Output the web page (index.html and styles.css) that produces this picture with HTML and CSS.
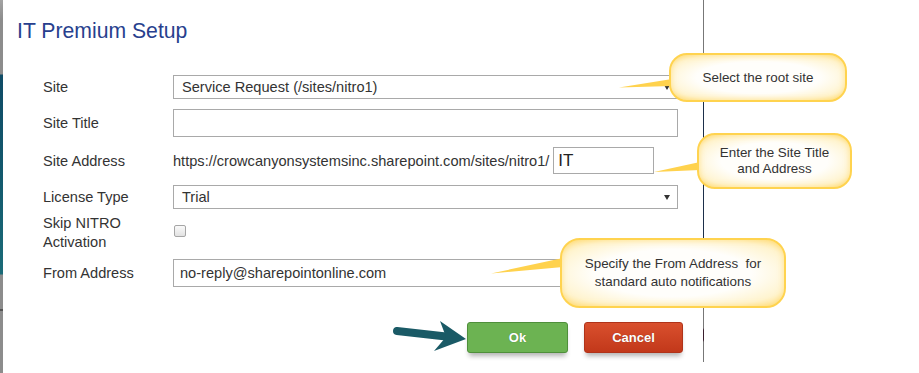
FILE: index.html
```html
<!DOCTYPE html>
<html>
<head>
<meta charset="utf-8">
<link rel="stylesheet" href="styles.css">
</head>
<body>
<div class="page">
  <div class="edge"></div>
  <div class="dialog">
    <h1 class="title">IT Premium Setup</h1>
    <div class="form">
      <div class="row r1">
        <div class="lbl">Site</div>
        <div class="select"><span>Service Request (/sites/nitro1)</span><span class="caret"></span></div>
      </div>
      <div class="row r2">
        <div class="lbl">Site Title</div>
        <input class="text-input" type="text" value="">
      </div>
      <div class="row r3">
        <div class="lbl">Site Address</div>
        <span class="url">https://crowcanyonsystemsinc.sharepoint.com/sites/nitro1/</span>
        <input class="short-input" type="text" value="IT">
      </div>
      <div class="row r4">
        <div class="lbl">License Type</div>
        <div class="select"><span>Trial</span><span class="caret"></span></div>
      </div>
      <div class="row r5">
        <div class="lbl lbl-2">Skip NITRO<br>Activation</div>
        <span class="check"></span>
      </div>
      <div class="row r6">
        <div class="lbl">From Address</div>
        <input class="text-input from" type="text" value="no-reply@sharepointonline.com">
      </div>
    </div>
    <div class="buttons">
      <div class="btn ok">Ok</div>
      <div class="btn cancel">Cancel</div>
    </div>
  </div>
  <div class="divider"></div>

  <svg class="overlay" width="919" height="373" viewBox="0 0 919 373">
    <polygon points="619,87.5 672,79 672,86" fill="#ffd24d"/>
    <polygon points="654,172 700,162 700,170" fill="#ffd24d"/>
    <polygon points="491,273.5 563,258 563,267" fill="#ffd24d"/>
    <line x1="397" y1="331" x2="446" y2="336.5" stroke="#1a5a66" stroke-width="8" stroke-linecap="round"/>
    <path d="M440,321 L466,339 L434,351 L446,337 Z" fill="#1a5a66"/>
  </svg>

  <div class="callout c1">Select the root site</div>
  <div class="callout c2">Enter the Site Title<br>and Address</div>
  <div class="callout c3">Specify the From Address&nbsp; for<br>standard auto notifications</div>
</div>
</body>
</html>
```

FILE: styles.css
```css
html, body {
  margin: 0;
  padding: 0;
  background: #fff;
}

.page {
  position: relative;
  width: 919px;
  height: 373px;
  overflow: hidden;
  display: flex;
  font-family: "Liberation Sans", Arial, sans-serif;
  color: #333;
}

.edge {
  flex: none;
  width: 3px;
  height: 373px;
  background: linear-gradient(to bottom,
    #a3a3a3 0, #8c8c8c 20px, #8c8c8c 74px,
    #0f4b66 75px, #135a6e 180px, #1b6b78 274px,
    #8c8c8c 275px, #8c8c8c 309px, #555 309px, #555 311px, #8c8c8c 311px);
}

.dialog {
  flex: none;
  width: 700px;
  padding-top: 19px;
}

.title {
  margin: 0 0 0 14px;
  font-weight: 400;
  font-size: 21.2px;
  line-height: 24px;
  color: #283f8e;
}

.form {
  margin: 32px 0 0 40px;
}

.row {
  display: flex;
  align-items: center;
}

.lbl {
  flex: none;
  width: 130px;
  font-size: 14.6px;
  color: #333;
}

.lbl-2 {
  line-height: 19px;
}

.r1 { height: 24px; }
.r2 { height: 28px; margin-top: 10px; }
.r3 { height: 27px; margin-top: 10px; }
.r4 { height: 24px; margin-top: 11px; }
.r5 { height: 38px; margin-top: 5px; }
.r6 { height: 28px; margin-top: 7px; }

.select {
  position: relative;
  box-sizing: border-box;
  width: 505px;
  height: 100%;
  border: 1px solid #a9a9a9;
  padding-left: 8px;
  display: flex;
  align-items: center;
  font-size: 14.6px;
  color: #333;
  background: #fff;
}

.caret {
  position: absolute;
  right: 7px;
  top: 50%;
  margin-top: -2px;
  width: 0;
  height: 0;
  border-left: 3px solid transparent;
  border-right: 3px solid transparent;
  border-top: 5px solid #333;
}

.text-input {
  box-sizing: border-box;
  width: 505px;
  height: 100%;
  margin: 0;
  border: 1px solid #a9a9a9;
  border-radius: 0;
  padding: 0 6px;
  font-family: "Liberation Sans", Arial, sans-serif;
  font-size: 14.6px;
  color: #333;
  outline: none;
  background: #fff;
}

.url {
  font-size: 14.6px;
  color: #333;
  white-space: nowrap;
}

.short-input {
  box-sizing: border-box;
  width: 101px;
  height: 100%;
  margin: 0 0 0 4px;
  border: 1px solid #a9a9a9;
  border-radius: 0;
  padding: 0 4px;
  font-family: "Liberation Sans", Arial, sans-serif;
  font-size: 17px;
  color: #222;
  outline: none;
  background: #fff;
}

.check {
  box-sizing: border-box;
  width: 12px;
  height: 12px;
  margin: 0 0 4px 1px;
  border: 1px solid #a6a6a6;
  border-radius: 2px;
  background: linear-gradient(#fafafa, #e2e2e2);
}

.buttons {
  display: flex;
  justify-content: flex-end;
  gap: 16px;
  margin: 35px 20px 0 0;
}

.btn {
  box-sizing: border-box;
  height: 31px;
  border-radius: 3px;
  display: flex;
  align-items: center;
  justify-content: center;
  font-weight: 700;
  font-size: 13px;
  color: #fff;
  text-shadow: 0 0 1px rgba(0, 0, 0, 0.35);
  box-shadow: 0 5px 5px -2px rgba(0, 0, 0, 0.3);
}

.ok {
  width: 101px;
  background: #6cb352;
  border: 1px solid #4f8f3b;
}

.cancel {
  width: 99px;
  background: linear-gradient(#d9502e, #c2381a);
  border: 1px solid #b0331a;
}

.divider {
  flex: none;
  width: 1px;
  height: 362px;
  background: linear-gradient(to bottom,
    #777 0, #777 100px, #1d2f4a 102px, #1d2f4a 240px,
    #777 310px, #777 328px, #3a1f2e 330px, #3a1f2e 340px, #777 342px);
}

.overlay {
  position: absolute;
  left: 0;
  top: 0;
  pointer-events: none;
}

.callout {
  position: absolute;
  box-sizing: border-box;
  display: flex;
  align-items: center;
  justify-content: center;
  text-align: center;
  font-size: 13.4px;
  line-height: 16px;
  color: #333;
  border: 2px solid #ffd34f;
  border-radius: 18px;
  background: radial-gradient(ellipse at center, #fffefb 50%, #fff4cf 80%, #ffe18a 100%);
  box-shadow: inset 0 0 6px rgba(255, 206, 70, 0.55);
}

.c1 {
  left: 669px;
  top: 53px;
  width: 178px;
  height: 49px;
}

.c2 {
  left: 697px;
  top: 133px;
  width: 155px;
  height: 56px;
}

.c3 {
  left: 560px;
  top: 238px;
  width: 226px;
  height: 70px;
  line-height: 18px;
  border-radius: 20px;
}
```
